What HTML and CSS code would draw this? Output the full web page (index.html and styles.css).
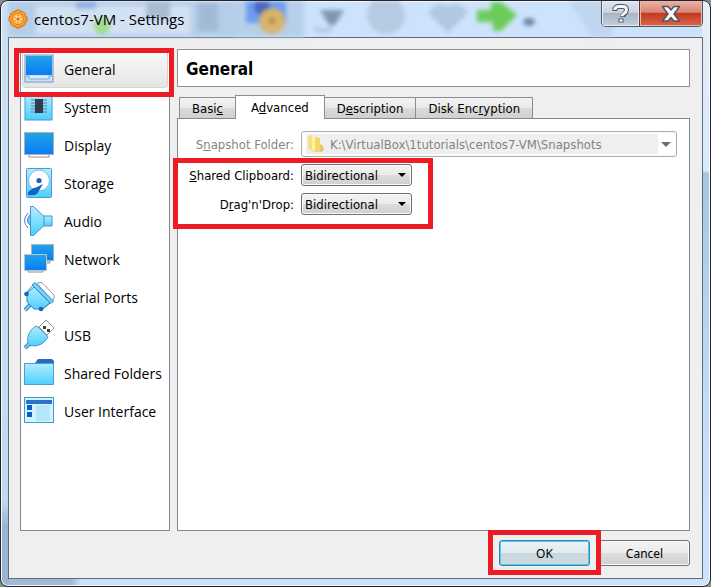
FILE: index.html
```html
<!DOCTYPE html>
<html lang="en">
  <head>
    <meta charset="UTF-8" />
    <meta name="viewport" content="width=device-width, initial-scale=1" />
    <title>centos7-VM - Settings</title>
    <link rel="stylesheet" href="styles.css">
  </head>
  <body>
    <div class="window">
      <header class="titlebar">
        <!-- toolbar behind the glass -->
        <svg class="glass" width="700" height="36" viewBox="0 0 700 36" aria-hidden="true">
          <rect x="0" y="-4" width="230" height="44" fill="#a9c2dc" opacity=".65" />
          <rect x="28" y="5" width="155" height="28" fill="#e3edf7" opacity=".65" />
          <circle cx="94" cy="25" r="8" fill="#9edb8d" />
          <rect x="68" y="-4" width="20" height="12" fill="#7f9fe0" opacity=".7" />
          <rect x="138" y="0" width="24" height="18" fill="#a8bdd4" />
          <rect x="190" y="2" width="20" height="28" fill="#97b0cc" opacity=".7" />
          <rect x="226" y="-4" width="70" height="44" fill="#b6cfea" />
          <rect x="238" y="-4" width="40" height="26" fill="#6f9cf0" />
          <circle cx="254" cy="6" r="8" fill="#4868bd" />
          <circle cx="264" cy="20" r="13" fill="#d8b56c" />
          <circle cx="264" cy="20" r="3" fill="#bd8240" />
          <path d="M312 9h24l-9 15h-6z" fill="#8096b4" />
          <path d="M306 27q10 5 18 0" stroke="#b3c5dc" stroke-width="4" fill="none" />
          <circle cx="378" cy="14" r="19" fill="#b6cae2" />
          <path d="M420 12q10-14 20-6q12-8 20 6l-20 20z" fill="#b2c8e0" />
          <path d="M469 9h14V1h10l16 13-16 16h-8v-9h-16z" fill="#6ccc5b" />
          <ellipse cx="521" cy="21" rx="6" ry="4" fill="#6d86a8" />
          <path d="M560 0h45v36h-20z" fill="#b8cde6" opacity=".6" />
        </svg>
        <svg class="app-icon" width="20" height="20" viewBox="0 0 20 20" aria-hidden="true">
          <path d="M8 1h4l1 2 2-.5 2.500 2.500-.5 2 2 1v4l-2 1 .5 2-2.500 2.500-2-.5-1 2H8l-1-2-2 .5L2.500 15l.5-2-2-1V8l2-1-.5-2L5 2.500l2 .5z" fill="#f7a027" stroke="#d9701b" />
          <circle cx="10" cy="10" r="5.500" fill="#ffd078" stroke="#e77b20" />
          <g fill="#dc671d"><circle cx="10" cy="10" r="1.500" /><circle cx="10" cy="6.500" r=".7" /><circle cx="10" cy="13.500" r=".7" /><circle cx="6.800" cy="8.500" r=".7" /><circle cx="13.200" cy="8.500" r=".7" /><circle cx="7" cy="12" r=".7" /><circle cx="13" cy="12" r=".7" /></g>
        </svg>
        <h1 class="title">centos7-VM - Settings</h1>
        <div class="window-buttons">
          <button type="button" class="help" aria-label="Help">
            <svg width="18" height="20" viewBox="0 0 18 20" fill="none">
              <path d="M3 7V4.500Q4 2.500 7 2.500h4Q14.500 2.500 14.500 6c0 3.500-4 3.500-4 7M9 14.500v4" stroke="#4d5363" stroke-width="5" />
              <path d="M3 6V4.500Q4 2.500 7 2.500h4Q14.500 2.500 14.500 6c0 3.500-4.500 3.500-4.500 6.200M9 15.300v2.400" stroke="#f4f4f4" stroke-width="3" />
            </svg>
          </button>
          <button type="button" class="close" aria-label="Close">
            <svg width="20" height="18" viewBox="0 0 20 18">
              <path d="M1.500 1.500h5.500l3 3.500 3-3.500h5.500l-5.500 7.500 5.500 7h-5.500l-3-3.500-3 3.500H1.500L7 9z" fill="#f8f8f8" stroke="#51525f" stroke-width="1.400" stroke-linejoin="round" />
            </svg>
          </button>
        </div>
      </header>

      <main class="dialog">
        <div class="columns">
          <nav class="sidebar">
            <a href="#general" class="nav-item active">
              <svg width="32" height="32" viewBox="0 0 32 32">
                <rect x="2" y="2" width="28" height="27" fill="#c5e2fb" stroke="#7b98b9" />
                <rect x="3" y="3" width="26" height="19" fill="url(#screen)" />
                <path d="M2 23h4v2q0 1 1 1h18q1 0 1-1v-2h4" fill="#dcecfb" stroke="#84a5cd" />
              </svg>
              General
              <span class="mark mark-nav"></span>
            </a>
            <a href="#system" class="nav-item">
              <svg width="32" height="32" viewBox="0 0 32 32">
                <rect x="2" y="2" width="27" height="27" fill="url(#light)" stroke="#3c9cdc" />
                <path d="M8 9h16M8 12h16M8 15h16M8 18h16M8 21h16" stroke="#5d7f9c" />
                <rect x="12" y="8" width="8" height="14" fill="#333a4b" />
              </svg>
              System
            </a>
            <a href="#display" class="nav-item">
              <svg width="32" height="32" viewBox="0 0 32 32">
                <path d="M6 25h20v3H6z" fill="#fff" stroke="#909090" />
                <rect x="1.500" y="3.500" width="29" height="22" fill="url(#screen)" stroke="#a8b2ba" />
              </svg>
              Display
            </a>
            <a href="#storage" class="nav-item">
              <svg width="32" height="32" viewBox="0 0 32 32">
                <rect x="3.500" y="1.500" width="25" height="29" rx="1" fill="url(#light)" stroke="#449bd8" />
                <circle cx="16" cy="13.500" r="10.500" fill="#fff" stroke="#75bbe3" />
                <circle cx="16" cy="13.500" r="2.600" fill="#1263c8" />
                <path d="M20 17L14 27q-4 2-9 1v-3q4-4 9-5z" fill="#1263c8" />
                <path d="M25 28l2-3" stroke="#7eb9d8" />
              </svg>
              Storage
            </a>
            <a href="#audio" class="nav-item">
              <svg width="32" height="32" viewBox="0 0 32 32" fill="none">
                <path d="M5 8q-7 8 0 15" stroke="#3982d2" />
                <path d="M7 10q-5 6 0 10" fill="#68cff8" stroke="#3982d2" />
                <path d="M20 11h9v10h-9z" fill="url(#light)" stroke="#4993ca" />
                <path d="M7.500 1.500h3L21 11.500v9L10.500 30.500h-3z" fill="url(#light)" stroke="#4993ca" />
              </svg>
              Audio
            </a>
            <a href="#network" class="nav-item">
              <svg width="32" height="32" viewBox="0 0 32 32">
                <path d="M20 18h7v2h-7z" fill="#fff" stroke="#909090" />
                <rect x="8.500" y="1.500" width="22" height="16" fill="url(#screen)" stroke="#a8b2ba" />
                <path d="M5 27h15v2H5z" fill="#fff" stroke="#909090" />
                <rect x="1.500" y="11.500" width="22" height="16" fill="url(#screen)" stroke="#b9c5ce" />
              </svg>
              Network
            </a>
            <a href="#serial-ports" class="nav-item">
              <svg width="32" height="32" viewBox="0 0 32 32">
                <path d="M14 2.500l2-1h3L31 14v3l-2 3z" fill="#fff" stroke="#969696" />
                <path d="M2 29l6-6" stroke="#327fc9" stroke-width="4" />
                <path d="M2 29l6-6" stroke="#71d4fb" stroke-width="2" />
                <path d="M11 6L4 12v9l7 7h8l8-6z" fill="url(#light)" stroke="#3982c7" />
                <path d="M9 4l3-2.500L30.500 20 28 22.500z" fill="#71d4fb" stroke="#3982c7" />
                <path d="M10 4L4 11M27 22l-7 6" stroke="#3982c7" />
                <circle cx="3.500" cy="13" r="2.300" fill="#1263c8" /><circle cx="18" cy="28" r="2.300" fill="#1263c8" />
              </svg>
              Serial Ports
            </a>
            <a href="#usb" class="nav-item">
              <svg width="32" height="32" viewBox="0 0 32 32">
                <path d="M16 8l7-7 8 8-7 7z" fill="#fff" stroke="#969696" />
                <path d="M20 7h3v3h-3zM24 10h3v3h-3z" fill="#404040" />
                <path d="M2 29l4-4" stroke="#327fc9" stroke-width="4" />
                <path d="M14 7L25 17.500c-3 7-10 10.500-18 9l-2-2C3.500 16 8 9 14 7z" fill="url(#light)" stroke="#4893c3" />
                <path d="M2 29l4-4" stroke="#71d4fb" stroke-width="2" />
              </svg>
              USB
            </a>
            <a href="#shared-folders" class="nav-item">
              <svg width="32" height="32" viewBox="0 0 32 32">
                <path d="M12 6l3-4h14l2 2v6H12z" fill="#2869c3" />
                <path d="M1.500 6.500h29v21h-29z" fill="url(#light)" stroke="#469fda" />
              </svg>
              Shared Folders
            </a>
            <a href="#user-interface" class="nav-item">
              <svg width="32" height="32" viewBox="0 0 32 32">
                <rect x="1.500" y="2.500" width="29" height="25" fill="#d5f2ff" stroke="#369ddc" />
                <path d="M3 5h26v4H3z" fill="#2b72c9" />
                <path d="M4 10h5v5H4zM4 17h5v5H4z" fill="#075fcd" />
                <path d="M13 10h14v16H13z" fill="#b5e7fb" />
              </svg>
              User Interface
            </a>
          </nav>

          <section class="content">
            <h2 class="page-title">General</h2>
            <div class="tabs" role="tablist">
              <button type="button" class="tab" role="tab">Basi<u>c</u></button>
              <button type="button" class="tab selected" role="tab" aria-selected="true">A<u>d</u>vanced</button>
              <button type="button" class="tab" role="tab">D<u>e</u>scription</button>
              <button type="button" class="tab" role="tab">Disk Enc<u>r</u>yption</button>
            </div>
            <form class="panel" id="settings">
              <div class="row disabled">
                <label for="snapshotFolder">S<u>n</u>apshot Folder:</label>
                <div class="select folder-select">
                  <svg width="20" height="20" viewBox="0 0 20 20" aria-hidden="true">
                    <path d="M12 15l7-1-3 4H5z" fill="#b8b8b8" opacity=".6" />
                    <path d="M2 2l5-1v16l-5-2z" fill="#f5de83" />
                    <path d="M8 3l6 1v14l-7-1z" fill="#f4d765" />
                    <path d="M6 2l3 2v15l-3-3z" fill="#fff0a8" />
                    <path d="M14 10l3 2v5l-3 1z" fill="#e7c85b" />
                  </svg>
                  <select id="snapshotFolder" disabled>
                    <option>K:\VirtualBox\1tutorials\centos7-VM\Snapshots</option>
                  </select>
                </div>
              </div>
              <div class="shared">
                <div class="row">
                  <label for="clipboard"><u>S</u>hared Clipboard:</label>
                  <div class="select">
                    <select id="clipboard">
                      <option>Disabled</option>
                      <option>Host To Guest</option>
                      <option>Guest To Host</option>
                      <option selected>Bidirectional</option>
                    </select>
                  </div>
                </div>
                <div class="row">
                  <label for="dragDrop">D<u>r</u>ag'n'Drop:</label>
                  <div class="select">
                    <select id="dragDrop">
                      <option>Disabled</option>
                      <option>Host To Guest</option>
                      <option>Guest To Host</option>
                      <option selected>Bidirectional</option>
                    </select>
                  </div>
                </div>
                <span class="mark mark-shared"></span>
              </div>
            </form>
          </section>
        </div>

        <footer class="actions">
          <div class="ok-wrap">
            <button type="submit" form="settings" class="btn btn-ok">OK</button>
            <span class="mark mark-ok"></span>
          </div>
          <button type="button" class="btn">Cancel</button>
        </footer>
      </main>
    </div>

    <!-- shared icon gradients -->
    <svg class="defs" width="0" height="0" aria-hidden="true">
      <linearGradient id="screen" x1="0" y1="0" x2="0" y2="1"><stop stop-color="#21a5e8" /><stop offset="1" stop-color="#087cf3" /></linearGradient>
      <linearGradient id="light" x1="0" y1="0" x2="0" y2="1"><stop stop-color="#b2edff" /><stop offset="1" stop-color="#4dcffd" /></linearGradient>
    </svg>
  </body>
</html>
```
FILE: styles.css
```css
* {
  box-sizing: border-box;
}
body {
  margin: 0;
  background: #8b8b86;
  font-family: "DejaVu Sans Condensed", "DejaVu Sans", sans-serif;
  font-size: 13px;
  color: #000;
}
.defs {
  position: absolute;
}
.window {
  display: flex;
  flex-direction: column;
  min-height: 100vh;
  padding: 0 7px 7px;
  border: 1px solid #22252f;
  border-radius: 8px;
  overflow: hidden;
  background:
    linear-gradient(#e4eff9, #d9e9f8 170px, #a9c5e3 172px, #c3dcf5 400px, #cfe4fb) right / 8px 100% no-repeat,
    linear-gradient(#cde1f6, #c7dcf1 400px, #c3d8ef 500px, #9db4d1 525px) left / 8px 100% no-repeat,
    linear-gradient(90deg, #a2b8d4 70px, #cbe2fc 80px) bottom / 100% 8px no-repeat,
    #cde3fc;
  box-shadow: inset 0 0 0 1px #f2f8fd;
}
.titlebar {
  position: relative;
  display: flex;
  align-items: center;
  height: 36px;
  gap: 6px;
}
.glass {
  position: absolute;
  left: 0;
  top: 0;
  filter: blur(2px);
}
.app-icon,
.title,
.window-buttons {
  position: relative;
}
.title {
  flex: 1;
  margin: 0;
  font: 15px "Open Sans", "Noto Sans", sans-serif;
}
.window-buttons {
  display: flex;
  align-self: flex-start;
  height: 26px;
  border: 1px solid #505768;
  border-top: 0;
  border-radius: 0 0 5px 5px;
  overflow: hidden;
}
.window-buttons button {
  display: flex;
  align-items: center;
  justify-content: center;
  padding: 0;
  border: 0;
}
.help {
  width: 37px;
  background: linear-gradient(#dde5ee, #cad5e1 45%, #a7b5c5 50%, #c3d0dd);
  box-shadow: inset 0 0 0 1px #e7eef5;
}
.window-buttons .close {
  width: 63px;
  border-left: 1px solid #6d3230;
  background: linear-gradient(#e8b4a6, #d88473 45%, #c43a22 50%, #d7674b);
  box-shadow: inset 0 0 0 1px #edb5a8;
}
.dialog {
  flex: 1;
  display: flex;
  flex-direction: column;
  padding: 11px 12px 12px 11px;
  border: 1px solid #606c7e;
  background: #efefef;
}
.columns {
  flex: 1;
  display: flex;
  gap: 7px;
}
.sidebar {
  flex: 0 0 150px;
  padding: 0 1px;
  border: 1px solid #838791;
  background: #fff;
}
.nav-item {
  position: relative;
  display: flex;
  align-items: center;
  gap: 9px;
  height: 38px;
  border: 1px solid transparent;
  border-radius: 3px;
  color: #000;
  font: 14px "Open Sans", "Noto Sans", sans-serif;
  text-decoration: none;
  white-space: nowrap;
}
.nav-item.active {
  border-color: #d5d5d5;
  background: linear-gradient(#fafafa, #e5e5e5);
}
.mark {
  position: absolute;
  z-index: 1;
  border: 5px solid #ed1c24;
  pointer-events: none;
}
.mark-nav {
  inset: -3px -7px -10px -9px;
}
.mark-shared {
  inset: -6px 244px -14px -17px;
}
.mark-ok {
  inset: -10px -11px -9px;
}
.content {
  flex: 1;
  display: flex;
  flex-direction: column;
  min-width: 0;
}
.page-title {
  height: 38px;
  margin: 0 0 8px;
  padding-left: 8px;
  border: 1px solid #929292;
  background: #fff;
  font: bold 17px/38px "DejaVu Sans Condensed", "DejaVu Sans", sans-serif;
}
.tabs {
  display: flex;
  align-items: flex-end;
  padding-left: 2px;
}
.tab {
  height: 21px;
  padding: 0 12px;
  border: 1px solid #8b8d96;
  border-bottom: 0;
  background: linear-gradient(#f3f3f3, #e9e9e9 50%, #dadada 52%, #d0d0d0);
  color: #000;
  font: inherit;
}
.tab + .tab {
  margin-left: -1px;
}
.tab.selected {
  position: relative;
  height: 24px;
  margin-bottom: -1px;
  padding: 0 15px;
  background: #fff;
}
.panel {
  flex: 1;
  padding: 12px;
  border: 1px solid #838791;
  background: #fff;
}
.row {
  display: grid;
  grid-template-columns: 104px auto 1fr;
  align-items: center;
  column-gap: 7px;
}
.row label {
  justify-self: end;
  white-space: nowrap;
}
.select {
  position: relative;
  display: flex;
  align-items: center;
  width: 111px;
  height: 22px;
  border: 1px solid #707070;
  border-radius: 3px;
  background: linear-gradient(#f3f3f3, #ebebeb 50%, #dddddd 51%, #cfcfcf);
  box-shadow: inset 0 0 0 1px #fafafa;
}
.select select {
  flex: 1;
  min-width: 0;
  height: 100%;
  padding: 0 18px 0 3px;
  border: 0;
  background: transparent;
  appearance: none;
  color: #000;
  font: inherit;
}
.select::after {
  content: "";
  position: absolute;
  right: 5px;
  border: 4px solid transparent;
  border-top-color: #000;
  border-bottom: 0;
  pointer-events: none;
}
.disabled {
  grid-template-columns: 104px 1fr;
  color: #838383;
}
.folder-select {
  width: auto;
  height: 26px;
  padding: 2px 18px 2px 4px;
  border-color: #adadad;
  background-color: #fff;
  background-image: linear-gradient(#efefef, #efefef);
  background-origin: content-box;
  background-size: 100% 100%;
  background-repeat: no-repeat;
}
.folder-select select {
  padding: 0 4px;
  color: #838383;
  opacity: 1;
}
.folder-select::after {
  border-width: 5px 5px 0;
  border-top-color: #6d6d6d;
}
.shared {
  position: relative;
  display: flex;
  flex-direction: column;
  gap: 7px;
  margin-top: 7px;
}
.actions {
  display: flex;
  justify-content: flex-end;
  gap: 9px;
  padding-top: 9px;
}
.ok-wrap {
  position: relative;
}
.btn {
  width: 91px;
  height: 26px;
  border: 1px solid #707070;
  border-radius: 3px;
  background: linear-gradient(#f3f3f3, #ebebeb 50%, #dddddd 51%, #cfcfcf);
  box-shadow: inset 0 0 0 1px #fafafa;
  color: #000;
  font: 12px "Noto Sans", "Open Sans", sans-serif;
}
.btn-ok {
  border-color: #3c7fb1;
  background: linear-gradient(#edf3f6, #e0e9ed 50%, #cbd8df 51%, #ced9df);
  box-shadow: inset 0 0 0 1px #45d1f7;
}
```
